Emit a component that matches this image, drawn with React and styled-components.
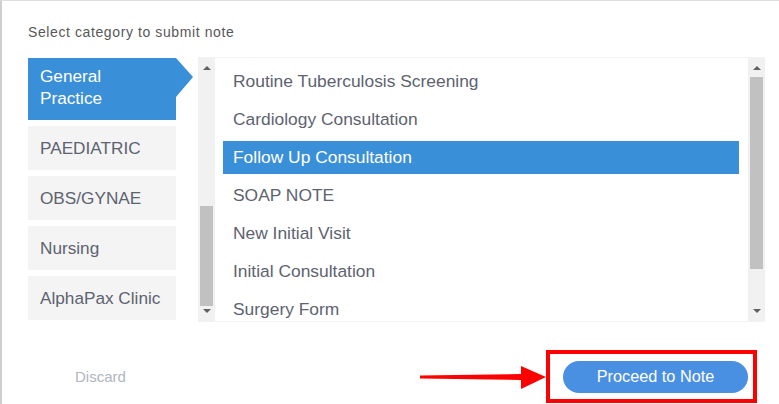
import React from 'react';
import styled, { createGlobalStyle } from 'styled-components';

const GlobalStyle = createGlobalStyle`
    body{
        margin:0;
        background:#fff;
        font-family:"Liberation Sans", Arial, sans-serif;
    }
`;

const Page = styled.div`
    width:779px;
    height:404px;
    box-sizing:border-box;
    border-top:1px solid #dedede;
    border-left:2px solid #cfcfcf;
    padding:23px 14px 0 26px;
    overflow:hidden;
`;

const Title = styled.div`
    font-size:14px;
    letter-spacing:0.6px;
    line-height:16px;
    color:#585858;
    margin-bottom:17px;
`;

const Body = styled.div`
    display:flex;
    height:265px;
`;

const Categories = styled.div`
    width:148px;
    display:flex;
    flex-direction:column;
    gap:6px;
    margin-top:1px;
`;

const Category = styled.div`
    position:relative;
    box-sizing:border-box;
    padding:${p => (p.$tall ? '7px 12px 11px' : '11px 12px')};
    font-size:17.2px;
    line-height:22px;
    white-space:nowrap;
    color:${p => (p.$active ? '#fff' : '#5d6370')};
    background:${p => (p.$active ? '#3a8fd9' : '#f4f4f4')};

    &::after{
        content:'';
        display:${p => (p.$active ? 'block' : 'none')};
        position:absolute;
        top:0;
        right:-17px;
        border-left:17px solid #3a8fd9;
        border-top:19px solid transparent;
        border-bottom:20px solid transparent;
    }
`;

const Panel = styled.div`
    display:flex;
    margin-left:22px;
    flex:1;
    border-top:1px solid #f2f2f2;
    border-bottom:1px solid #f2f2f2;
`;

const Track = styled.div`
    position:relative;
    width:17px;
    background:#f1f1f1;
    flex-shrink:0;
`;

const Thumb = styled.div`
    position:absolute;
    left:2px;
    right:2px;
    top:${p => p.$top}px;
    height:${p => p.$height}px;
    background:#c1c1c1;
`;

const ArrowUp = styled.div`
    position:absolute;
    left:5px;
    top:8px;
    border-left:4px solid transparent;
    border-right:4px solid transparent;
    border-bottom:4px solid #606060;
`;

const ArrowDown = styled.div`
    position:absolute;
    left:5px;
    bottom:8px;
    border-left:4px solid transparent;
    border-right:4px solid transparent;
    border-top:4px solid #606060;
`;

const Notes = styled.div`
    flex:1;
    display:flex;
    flex-direction:column;
    gap:5px;
    padding:7px 9px 0 8px;
    overflow:hidden;
`;

const Note = styled.div`
    height:33px;
    flex-shrink:0;
    display:flex;
    align-items:center;
    padding-left:10px;
    font-size:17.4px;
    color:${p => (p.$active ? '#fff' : '#5d6370')};
    background:${p => (p.$active ? '#3a8fd9' : 'transparent')};
`;

const Footer = styled.div`
    display:flex;
    align-items:center;
    margin-top:28px;
`;

const Discard = styled.button`
    margin-left:47px;
    border:none;
    background:none;
    padding:0;
    font-family:inherit;
    font-size:15px;
    color:#b1b5be;
    cursor:pointer;
`;

const Pointer = styled.svg`
    margin-left:auto;
    display:block;
`;

const Highlight = styled.div`
    border:4px solid #f00;
    padding:7px 5px 6px 13px;
    margin-right:8px;
`;

const Proceed = styled.button`
    width:185px;
    height:32px;
    padding:0 0 2px;
    border:none;
    border-radius:16px;
    background:#4a90e2;
    color:#fff;
    font-family:inherit;
    font-size:16.3px;
    cursor:pointer;
`;

const categories = ['PAEDIATRIC', 'OBS/GYNAE', 'Nursing', 'AlphaPax Clinic'];

const notes = [
    'Routine Tuberculosis Screening',
    'Cardiology Consultation',
    'Follow Up Consultation',
    'SOAP NOTE',
    'New Initial Visit',
    'Initial Consultation',
    'Surgery Form',
];

const App = () => {
    return (
        <>
        <GlobalStyle />
        <Page>
            <Title>Select category to submit note</Title>
            <Body>
                <Categories>
                    <Category $active $tall>General<br />Practice</Category>
                    {categories.map(c => (
                        <Category key={c}>{c}</Category>
                    ))}
                </Categories>
                <Panel>
                    <Track>
                        <ArrowUp />
                        <Thumb $top={148} $height={100} />
                        <ArrowDown />
                    </Track>
                    <Notes>
                        {notes.map(n => (
                            <Note key={n} $active={n === 'Follow Up Consultation'}>{n}</Note>
                        ))}
                    </Notes>
                    <Track>
                        <ArrowUp />
                        <Thumb $top={19} $height={192} />
                        <ArrowDown />
                    </Track>
                </Panel>
            </Body>
            <Footer>
                <Discard>Discard</Discard>
                <Pointer width="126" height="28" viewBox="0 0 126 28">
                    <path d="M0 12.5 L101 11 L101 3 L126 14 L101 26 L101 17 L0 15.5 Z" fill="#f00" />
                </Pointer>
                <Highlight>
                    <Proceed>Proceed to Note</Proceed>
                </Highlight>
            </Footer>
        </Page>
        </>
    );
};

export default App;
